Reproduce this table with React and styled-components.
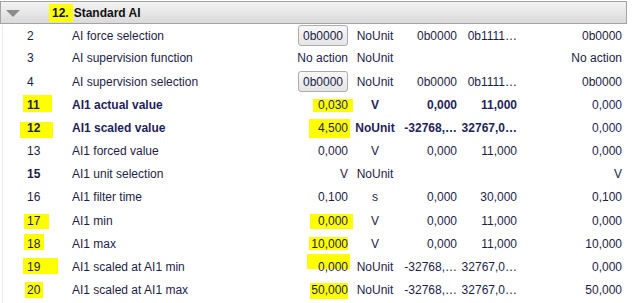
import React from "react";
import styled, { createGlobalStyle } from "styled-components";

const Global = createGlobalStyle`
  html, body { margin: 0; padding: 0; background: #ffffff; }
  body { font-family: "Liberation Sans", Arial, sans-serif; font-size: 12px; color: #1d1d48; }
`;

const Panel = styled.div`
  width: 632px;
  height: 303px;
  padding-top: 1px;
  box-sizing: border-box;
  overflow: hidden;
`;

const Header = styled.div`
  width: 627px;
  height: 23px;
  box-sizing: border-box;
  border: 1px solid #a3a3a3;
  background: linear-gradient(#f3f3f3, #dadada);
  display: flex;
  align-items: center;
  padding-left: 5px;
  font-weight: bold;
  color: #111111;
  line-height: 14px;
`;

const Caret = styled.svg`
  width: 14px;
  height: 7px;
  margin-right: 32px;
  margin-top: 1px;
  flex: none;
`;

const HeaderTitle = styled.span`
  margin-left: 5px;
`;

const Body = styled.div`
  border-left: 1px solid #ececec;
  margin-left: 2px;
  margin-top: 1px;
`;

const Row = styled.div`
  display: grid;
  grid-template-columns: 69px 218px 58px 54px 55px 60px 105px;
  height: 23.2px;
  padding-bottom: 3px;
  box-sizing: border-box;
  align-items: center;
  line-height: 14px;
  white-space: nowrap;
  font-weight: ${(p) => (p.$bold ? "bold" : "normal")};
  color: ${(p) => (p.$bold ? "#1f1f5c" : "#1d1d48")};
`;

const Index = styled.div`
  padding-left: 24px;
  font-weight: ${(p) => (p.$bold ? "bold" : "inherit")};
`;

const Name = styled.div``;

const Num = styled.div`
  text-align: right;
  font-weight: ${(p) => (p.$plain ? "normal" : "inherit")};
`;

const Unit = styled.div`
  text-align: center;
`;

const Mark = styled.span`
  position: relative;
  display: inline-block;
  height: 14px;
  z-index: 0;
  &::before {
    content: "";
    position: absolute;
    z-index: -1;
    background: #ffff00;
    top: ${(p) => -p.$t}px;
    bottom: ${(p) => -p.$b}px;
    left: ${(p) => -p.$l}px;
    right: ${(p) => -p.$r}px;
  }
`;

const Btn = styled.span`
  display: inline-flex;
  align-items: center;
  height: 21px;
  box-sizing: border-box;
  padding: 0 4px;
  border: 1px solid #ababab;
  border-radius: 3px;
  background: linear-gradient(#f8f8f8, #e5e5e5);
  font-weight: normal;
  color: #1d1d48;
`;

const hl = (text, o) =>
  o ? (
    <Mark $t={o[0]} $b={o[1]} $l={o[2]} $r={o[3]}>
      {text}
    </Mark>
  ) : (
    text
  );

const rows = [
  { i: "2", n: "AI force selection", v: "0b0000", btn: true, u: "NoUnit", mn: "0b0000", mx: "0b1111…", d: "0b0000" },
  { i: "3", n: "AI supervision function", v: "No action", u: "NoUnit", mn: "", mx: "", d: "No action" },
  { i: "4", n: "AI supervision selection", v: "0b0000", btn: true, u: "NoUnit", mn: "0b0000", mx: "0b1111…", d: "0b0000" },
  { i: "11", bold: true, ih: [3, 0, 4, 12], n: "AI1 actual value", v: "0,030", vh: [-1, 0, 5, 5], u: "V", mn: "0,000", mx: "11,000", d: "0,000" },
  { i: "12", bold: true, ih: [-1, 3, 7, 13], n: "AI1 scaled value", v: "4,500", vh: [2, 3, 9, 2], u: "NoUnit", mn: "-32768,…", mx: "32767,0…", d: "0,000" },
  { i: "13", n: "AI1 forced value", v: "0,000", u: "V", mn: "0,000", mx: "11,000", d: "0,000" },
  { i: "15", ib: true, n: "AI1 unit selection", v: "V", u: "NoUnit", mn: "", mx: "", d: "V" },
  { i: "16", n: "AI1 filter time", v: "0,100", u: "s", mn: "0,000", mx: "30,000", d: "0,100" },
  { i: "17", ih: [0, 1, 3, 9], n: "AI1 min", v: "0,000", vh: [0, 1, 8, 5], u: "V", mn: "0,000", mx: "11,000", d: "0,000" },
  { i: "18", ih: [3, -1, 3, 4], n: "AI1 max", v: "10,000", vh: [0, -1, 2, 0], u: "V", mn: "0,000", mx: "11,000", d: "10,000" },
  { i: "19", ih: [2, 0, 4, 18], n: "AI1 scaled at AI1 min", v: "0,000", vh: [6, -5, 11, 2], u: "NoUnit", mn: "-32768,…", mx: "32767,0…", d: "0,000" },
  { i: "20", ih: [1, 1, 2, 3], n: "AI1 scaled at AI1 max", v: "50,000", vh: [0, 2, 1, 0], u: "NoUnit", mn: "-32768,…", mx: "32767,0…", d: "50,000" },
];

export default function App() {
  return (
    <Panel>
      <Global />
      <Header>
        <Caret viewBox="0 0 14 7">
          <path d="M0 0 L14 0 L7 7 Z" fill="#8c8c8c" />
        </Caret>
        <Mark $t={2} $b={2} $l={3} $r={4}>12.</Mark>
        <HeaderTitle>Standard AI</HeaderTitle>
      </Header>
      <Body>
        {rows.map((r) => (
          <Row key={r.i} $bold={r.bold}>
            <Index $bold={r.ib}>{hl(r.i, r.ih)}</Index>
            <Name>{r.n}</Name>
            <Num $plain>{r.btn ? <Btn>{r.v}</Btn> : hl(r.v, r.vh)}</Num>
            <Unit>{r.u}</Unit>
            <Num>{r.mn}</Num>
            <Num>{r.mx}</Num>
            <Num $plain>{r.d}</Num>
          </Row>
        ))}
      </Body>
    </Panel>
  );
}
